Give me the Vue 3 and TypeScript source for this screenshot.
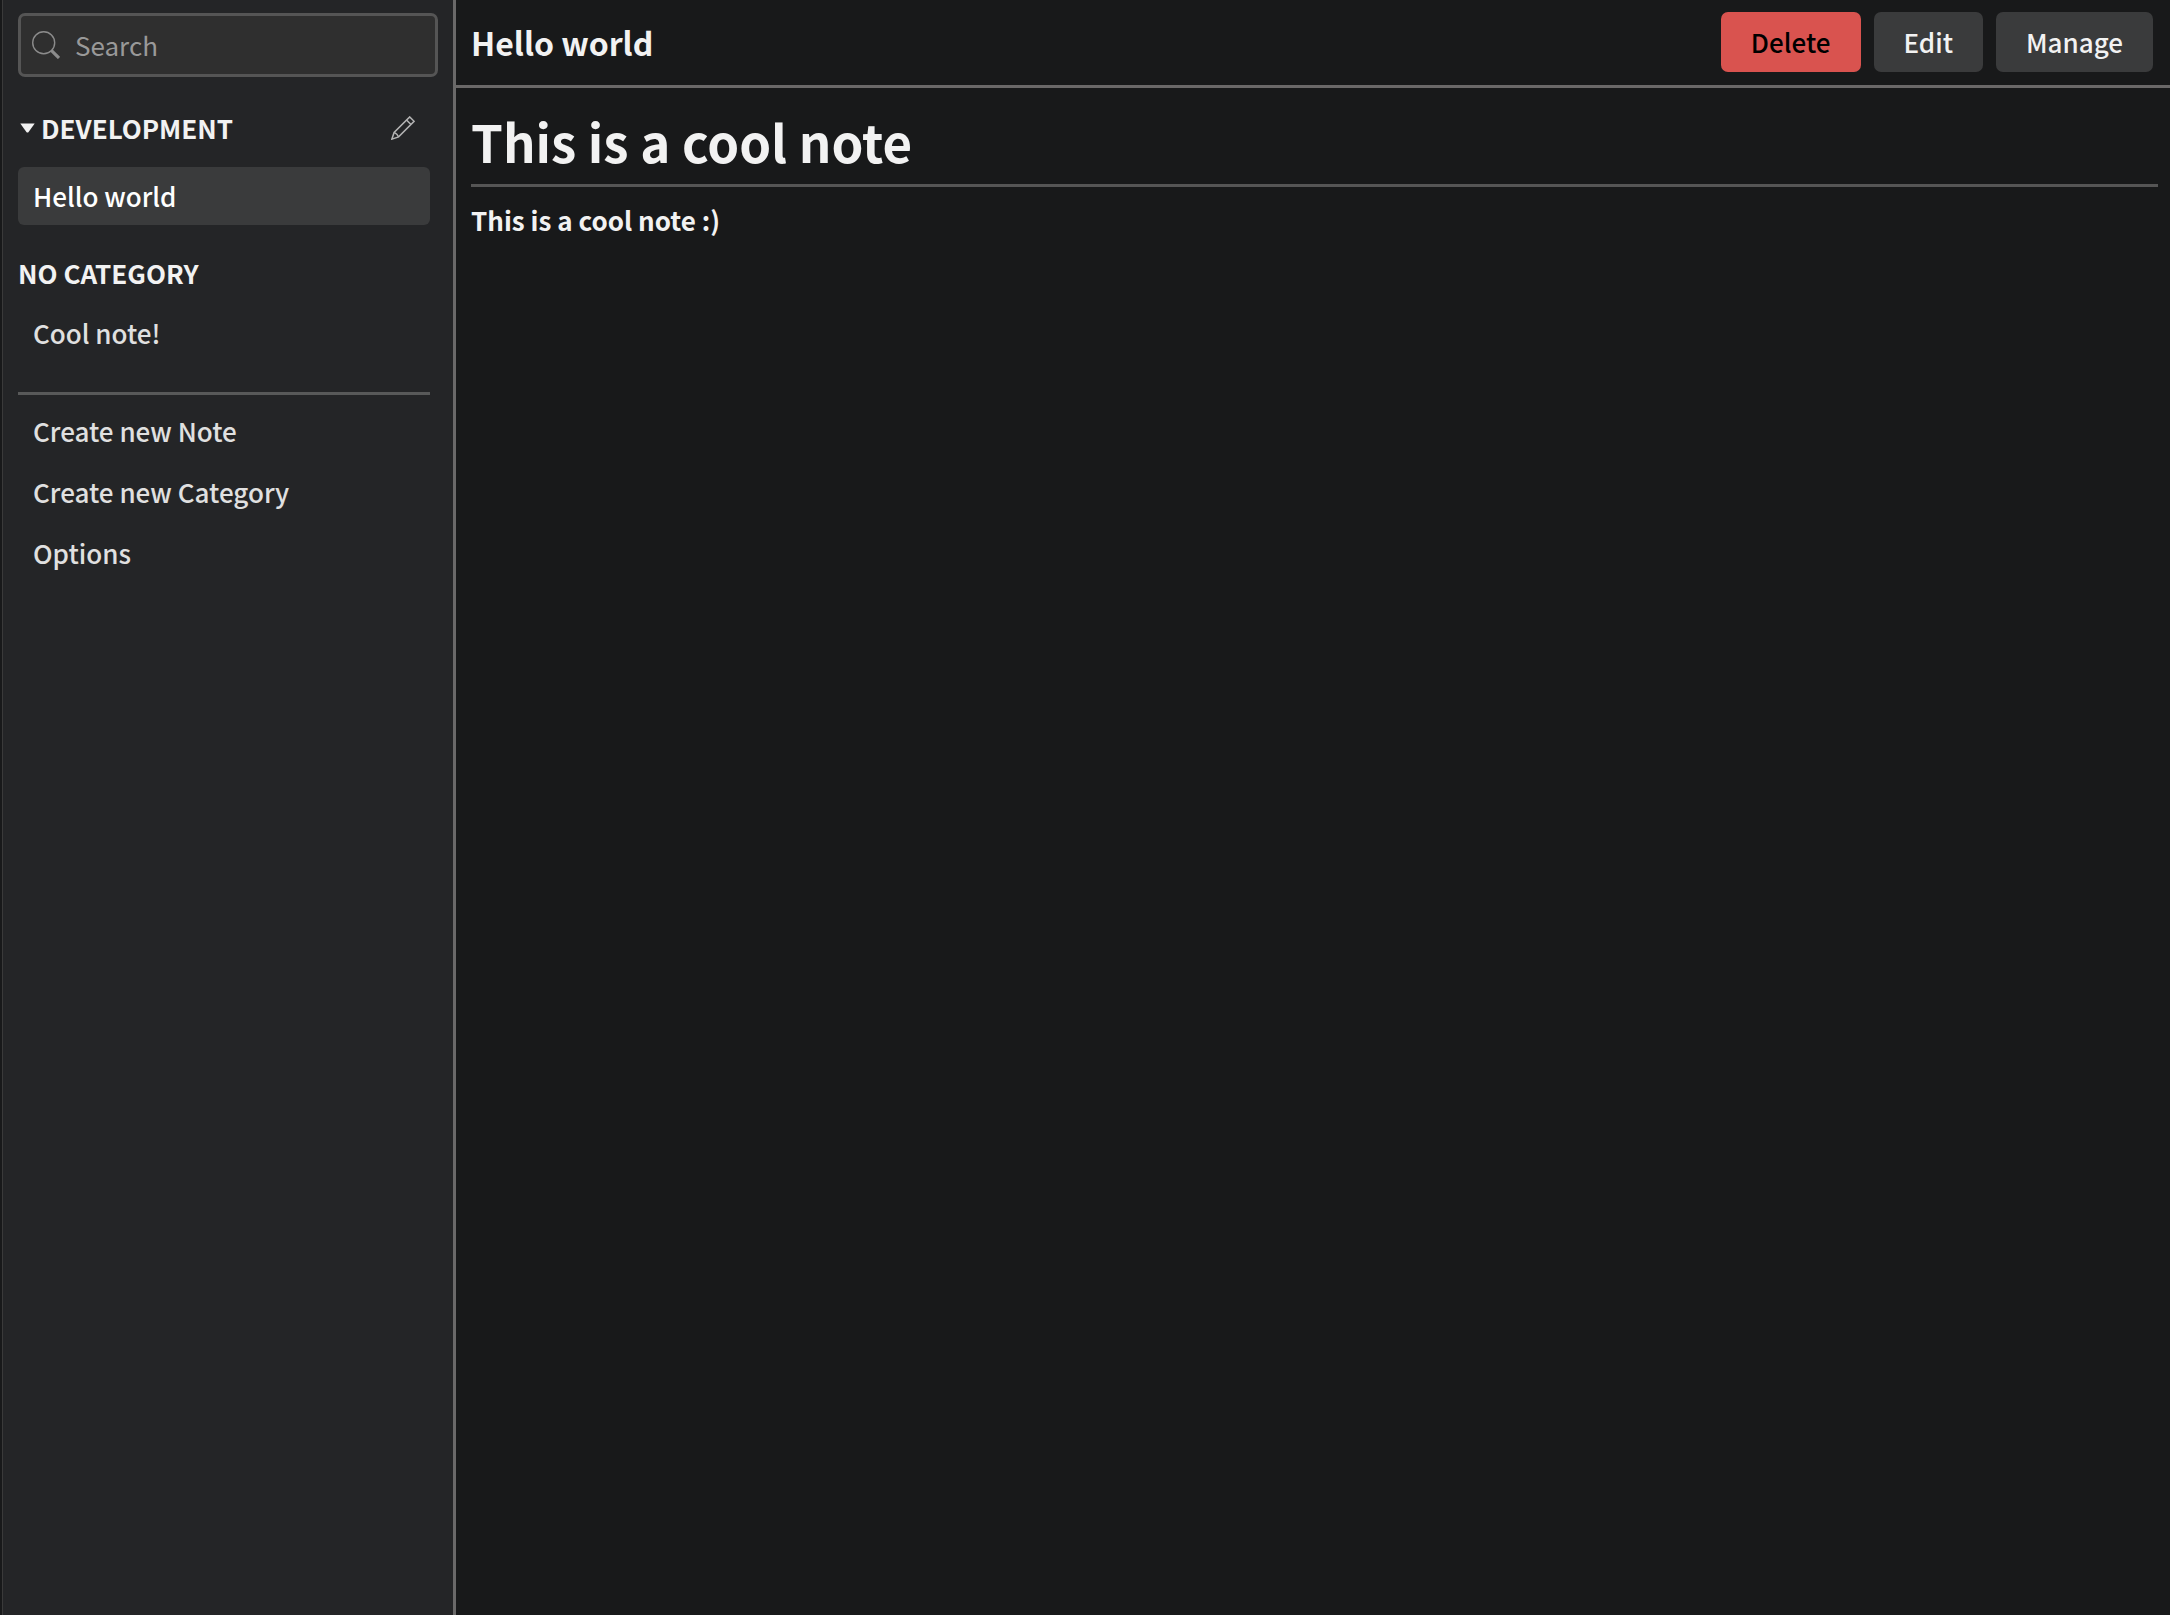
<script setup lang="ts">
import { ref } from 'vue'

interface Note {
  id: number
  title: string
}

const query = ref('')
const selected = ref(1)
const developmentNotes: Note[] = [{ id: 1, title: 'Hello world' }]
const looseNotes: Note[] = [{ id: 2, title: 'Cool note!' }]
const actions: string[] = ['Create new Note', 'Create new Category', 'Options']
</script>

<template>
  <div class="app">
    <aside class="sidebar">
      <label class="search">
        <svg class="search-icon" viewBox="0 0 28 28" aria-hidden="true">
          <circle cx="11.7" cy="11.7" r="11" fill="none" stroke="currentColor" stroke-width="1.4" />
          <path d="M19.3 19.3L27 27" fill="none" stroke="currentColor" stroke-width="3.2" />
        </svg>
        <input v-model="query" type="search" placeholder="Search" aria-label="Search" />
      </label>

      <nav class="lists">
        <section>
          <header class="category">
            <svg class="caret" viewBox="0 0 15 10" aria-hidden="true">
              <path d="M.3.4h14.4L8.6 8.9q-1.1 1.2-2.2 0z" fill="currentColor" />
            </svg>
            <h2>DEVELOPMENT</h2>
            <button class="edit-category" type="button" aria-label="Edit category">
              <svg viewBox="0 0 24 24" fill="none" stroke="currentColor" stroke-width="1.5" aria-hidden="true">
                <path d="M.9 23.1L3.1 16.4 18.7.9 23.1 5.3 7.6 20.9z" />
                <path d="M3.1 16.4L5.8 18.2 7.6 20.9M15.5 4L20 8.5" />
              </svg>
            </button>
          </header>
          <button
            v-for="note in developmentNotes"
            :key="note.id"
            type="button"
            class="item"
            :class="{ active: note.id === selected }"
            @click="selected = note.id"
          >
            {{ note.title }}
          </button>
        </section>

        <section>
          <header class="category loose">
            <h2>NO CATEGORY</h2>
          </header>
          <button
            v-for="note in looseNotes"
            :key="note.id"
            type="button"
            class="item"
            :class="{ active: note.id === selected }"
            @click="selected = note.id"
          >
            {{ note.title }}
          </button>
        </section>

        <hr />

        <div class="actions">
          <button v-for="action in actions" :key="action" type="button" class="item">{{ action }}</button>
        </div>
      </nav>
    </aside>

    <main class="main">
      <header class="topbar">
        <span class="title">Hello world</span>
        <div class="buttons">
          <button type="button" class="btn danger">Delete</button>
          <button type="button" class="btn">Edit</button>
          <button type="button" class="btn">Manage</button>
        </div>
      </header>
      <article class="note">
        <h1>This is a cool note</h1>
        <p>This is a cool note :)</p>
      </article>
    </main>
  </div>
</template>

<style>
body {
  margin: 0;
  background: #18191a;
}
</style>

<style scoped>
.app {
  display: flex;
  box-sizing: border-box;
  min-height: 100vh;
  padding-left: 2px;
  background: #18191a;
  color: #f2f2f2;
  font-family: "Noto Sans CJK JP", "Noto Sans CJK SC", "Noto Sans", sans-serif;
  font-size: 26px;
  line-height: 38px;
}

button,
input {
  margin: 0;
  font: inherit;
  color: inherit;
}

button {
  border: 0;
  background: none;
  cursor: pointer;
}

.sidebar {
  box-sizing: border-box;
  flex: 0 0 454px;
  padding: 13px 15px 0;
  border-left: 1px solid #3a3a3a;
  border-right: 3px solid #6a6969;
  background: #242527;
}

.search {
  display: flex;
  align-items: center;
  box-sizing: border-box;
  height: 64px;
  padding: 0 11px;
  gap: 15px;
  border: 3px solid #555555;
  border-radius: 7px;
  background: #2f2f2f;
}

.search-icon {
  flex: none;
  width: 28px;
  height: 28px;
  color: #8c8c8c;
}

.search input {
  flex: 1;
  min-width: 0;
  padding: 0;
  border: 0;
  outline: 0;
  background: none;
  appearance: none;
}

.search input::placeholder {
  color: #999999;
  opacity: 1;
}

.lists {
  margin-right: 8px;
}

.category {
  display: flex;
  align-items: center;
  height: 58px;
  padding: 22px 15px 10px 2px;
}

.category.loose {
  height: 38px;
  padding: 29px 0 12px;
}

h2 {
  flex: 1;
  margin: 0;
  font-size: 26px;
  font-weight: 700;
}

.caret {
  flex: none;
  width: 15px;
  height: 10px;
  margin-right: 6px;
}

.edit-category {
  display: flex;
  padding: 0;
  color: #b4b4b4;
}

.edit-category svg {
  width: 24px;
  height: 24px;
}

.item {
  display: block;
  box-sizing: border-box;
  width: 100%;
  height: 58px;
  padding: 0 15px;
  border-radius: 6px;
  color: #e0e0e0;
  font-weight: 500;
  text-align: left;
}

.item.active {
  background: #3a3b3c;
  color: #ffffff;
}

hr {
  height: 3px;
  margin: 30px 0 7px;
  border: 0;
  background: #585959;
}

.actions {
  display: flex;
  flex-direction: column;
  gap: 3px;
}

.main {
  flex: 1;
  min-width: 0;
}

.topbar {
  display: flex;
  align-items: center;
  justify-content: space-between;
  height: 84px;
  padding: 0 17px 1px 15px;
  border-bottom: 3px solid #6a6868;
}

.title {
  font-size: 32px;
  font-weight: 700;
}

.buttons {
  display: flex;
  gap: 13px;
}

.btn {
  height: 60px;
  padding: 0 30px;
  border-radius: 7px;
  background: #3a3b3c;
  font-weight: 500;
}

.btn.danger {
  background: #d9534f;
  color: #000000;
}

.note {
  padding: 15px 12px 15px 15px;
}

h1 {
  margin: 0 0 14px;
  padding-bottom: 5px;
  border-bottom: 3px solid #555555;
  font-size: 51px;
  font-weight: 700;
  line-height: 76px;
}

p {
  margin: 0;
  font-weight: 700;
}
</style>
